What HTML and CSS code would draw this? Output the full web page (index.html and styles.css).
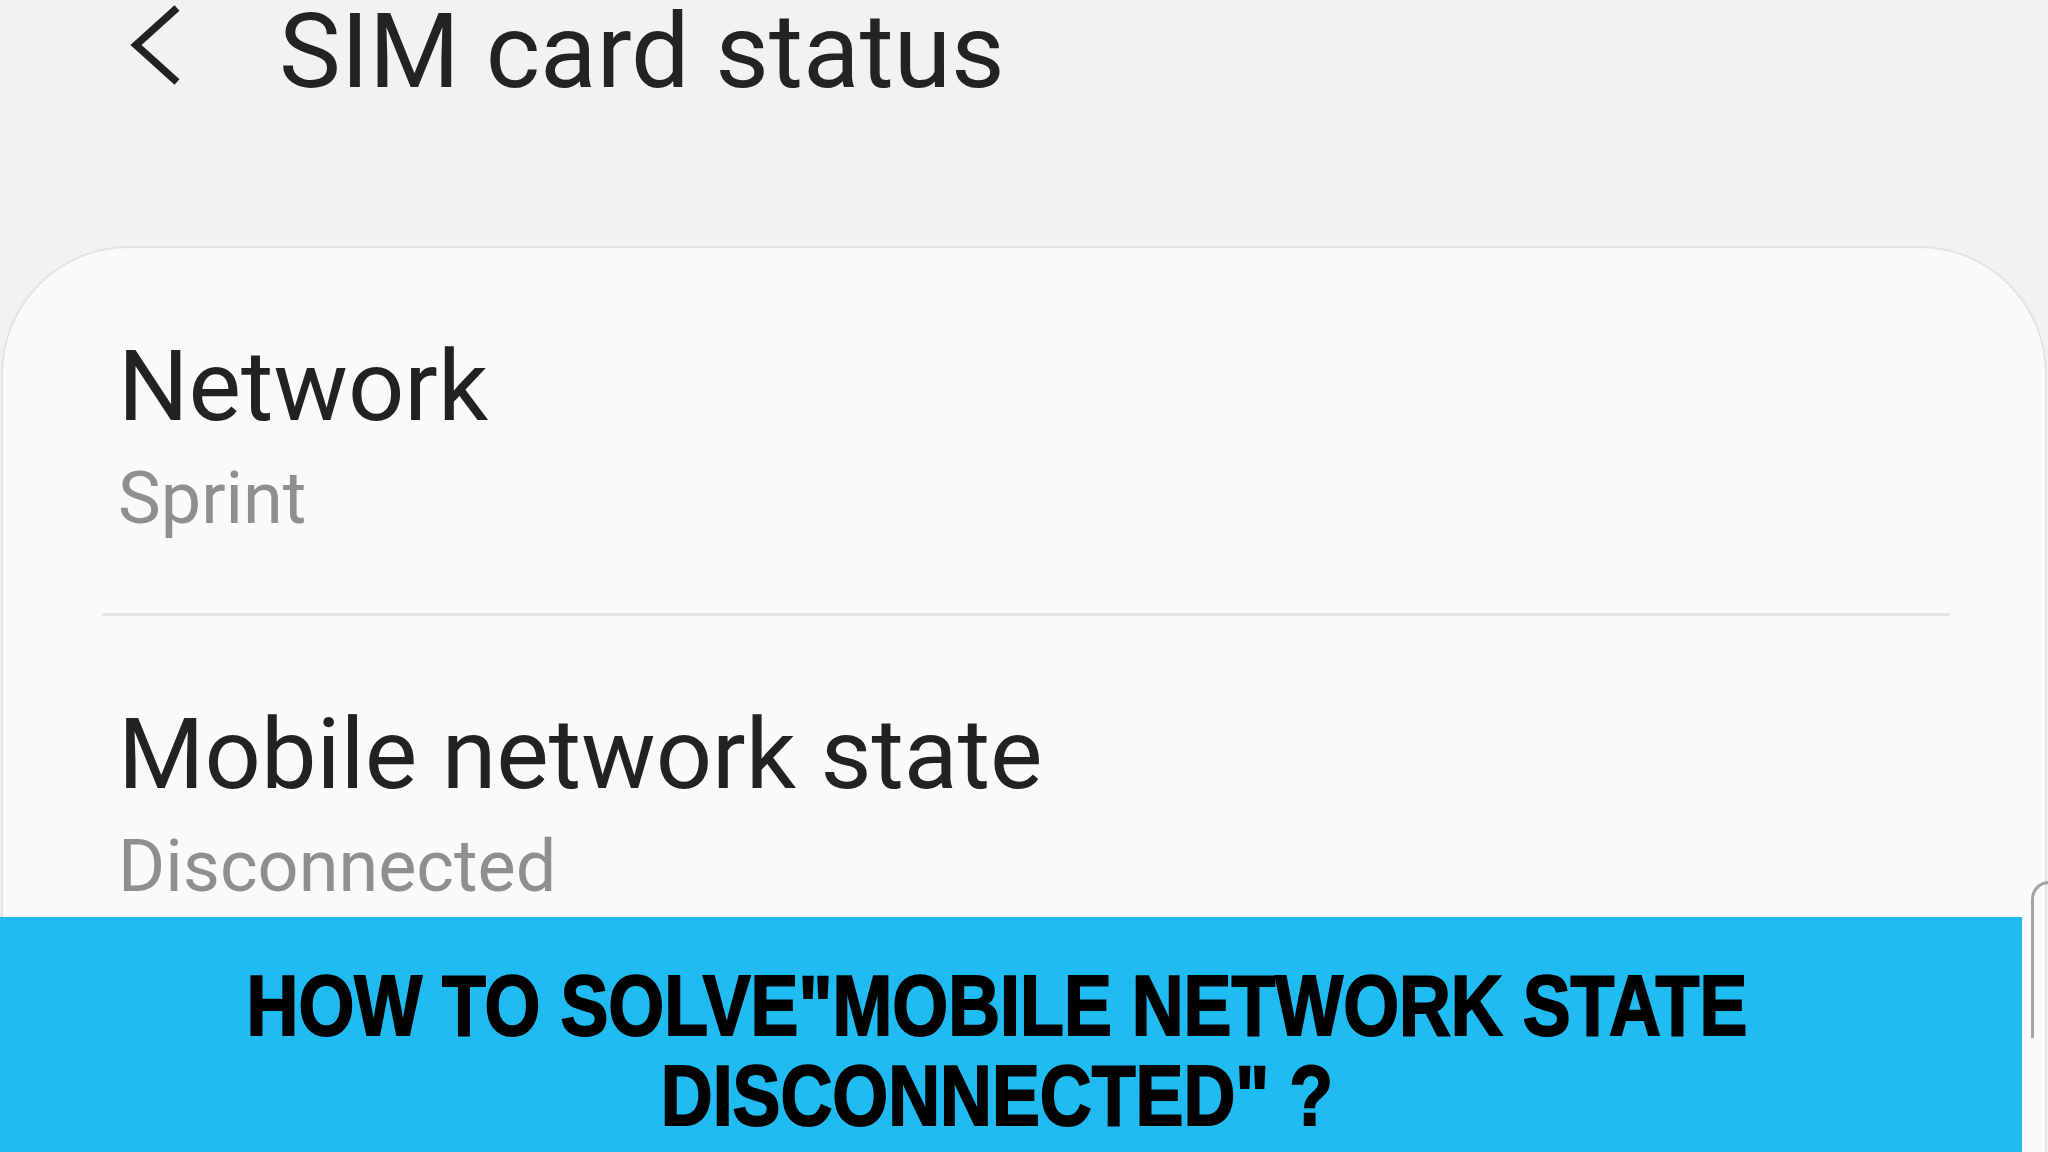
FILE: index.html
```html
<!DOCTYPE html>
<html lang="en">
<head>
    <meta charset="UTF-8">
    <meta name="viewport" content="width=device-width, initial-scale=1.0">
    <title>SIM card status</title>
    <link rel="stylesheet" href="styles.css">
</head>
<body>
    <div class="screen">
        <header class="app-bar">
            <button class="back-btn" aria-label="Back">
                <svg width="56" height="90" viewBox="0 0 56 90">
                    <polyline points="49,8 8,45 49,82" fill="none" stroke="#222" stroke-width="7.5" stroke-linecap="butt" stroke-linejoin="miter"/>
                </svg>
            </button>
            <h1 class="app-title">SIM card status</h1>
        </header>

        <section class="card">
            <div class="row">
                <div class="row-title">Network</div>
                <div class="row-sub">Sprint</div>
            </div>
            <div class="row">
                <div class="row-title">Mobile network state</div>
                <div class="row-sub">Disconnected</div>
            </div>
        </section>

        <div class="banner">
            <p class="banner-text">HOW TO SOLVE"MOBILE NETWORK STATE<br>DISCONNECTED" ?</p>
        </div>

        <div class="edge-handle"></div>
    </div>
</body>
</html>
```

FILE: styles.css
```css
body {
    margin: 0;
    padding: 0;
    background-color: #f2f2f2;
    font-family: Roboto, "Noto Sans", sans-serif;
    overflow: hidden;
}

.screen {
    position: relative;
    width: 2048px;
    height: 1152px;
    overflow: hidden;
}

/* top bar */
.app-bar {
    display: flex;
    align-items: flex-start;
    padding-left: 128px;
    height: 104px;
}

.back-btn {
    background: none;
    border: none;
    padding: 0;
    margin: 0;
    width: 56px;
    height: 90px;
    cursor: pointer;
}

.back-btn svg {
    display: block;
}

.app-title {
    margin: 0 0 0 95px;
    font-size: 104px;
    line-height: 104px;
    font-weight: 400;
    color: #232323;
}

/* settings card */
.card {
    margin: 142px 1px 0;
    background-color: #fafafa;
    border: 2px solid #e3e3e3;
    border-radius: 128px 128px 0 0;
    height: 1000px;
}

.row {
    margin: 0 95px 0 99px;
    padding: 88px 0 78px 16px;
    border-bottom: 3px solid #e6e6e6;
}

.row-title {
    font-size: 99px;
    line-height: 100px;
    color: #222;
}

.row-sub {
    margin-top: 27px;
    font-size: 72px;
    line-height: 72px;
    color: #8f8f8f;
}

/* headline banner over the screenshot */
.banner {
    position: absolute;
    left: 0;
    top: 917px;
    width: 2022px;
    height: 235px;
    background-color: rgba(7, 180, 239, 0.9);
    box-sizing: border-box;
    padding: 43px 28px 0 0;
}

.banner-text {
    margin: 0;
    font-family: "Liberation Sans", Arial, sans-serif;
    font-weight: 700;
    font-size: 86px;
    line-height: 90px;
    color: #000;
    text-align: center;
    -webkit-text-stroke: 2px #000;
    transform: scaleX(0.835);
    transform-origin: center;
}

.edge-handle {
    position: absolute;
    left: 2031px;
    top: 881px;
    width: 40px;
    height: 154px;
    border-left: 3px solid #a3a3a3;
    border-top: 3px solid #a3a3a3;
    border-top-left-radius: 18px;
}
```
